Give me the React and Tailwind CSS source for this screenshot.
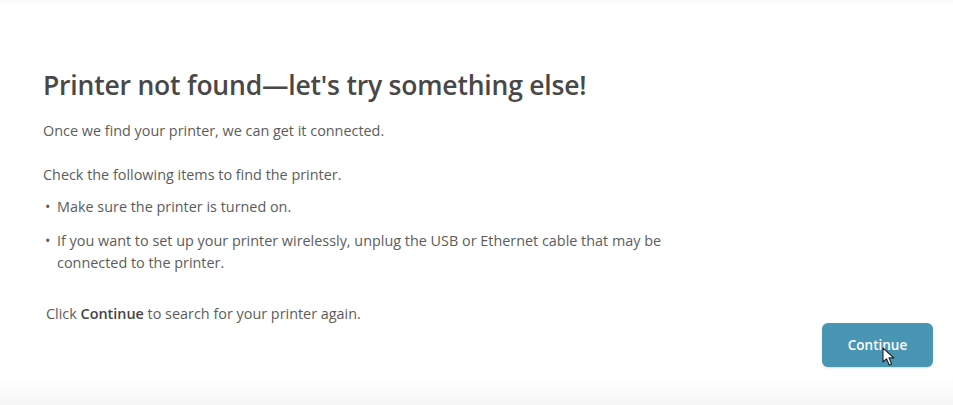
import React from 'react';

const Cursor = () => (
    <svg width="14" height="20" viewBox="0 0 14 20" className="absolute left-[60px] top-[24px]">
        <path d="M1 1 L1 15 L4.5 11.8 L7.2 18 L9.6 17 L7 10.9 L11.8 10.9 Z" fill="#fff" stroke="#222" strokeWidth="1.1" strokeLinejoin="round" />
    </svg>
);

export default function App() {
    return (
        <div className="w-[953px] h-[405px] bg-white relative overflow-hidden text-[#5c5c5c]" style={{ fontFamily: '"Open Sans", "Noto Sans", sans-serif' }}>
            <div className="h-[6px] bg-gradient-to-b from-[#f9f9f9] to-white"></div>

            <div className="pl-[43px] pt-[61px]">
                <h1 className="text-[26.5px] leading-[36px] font-semibold text-[#484848] tracking-[-0.2px]">
                    Printer not found—let's try something else!
                </h1>
                <p className="mt-[18px] text-[14.4px] leading-[20px]">Once we find your printer, we can get it connected.</p>
                <p className="mt-[24px] text-[14.4px] leading-[20px]">Check the following items to find the printer.</p>
                <ul className="mt-[11px] text-[14.4px] leading-[22px] flex flex-col gap-[12px]">
                    <li className="flex"><span className="w-[14px] shrink-0 pl-[2px]">•</span><span>Make sure the printer is turned on.</span></li>
                    <li className="flex"><span className="w-[14px] shrink-0 pl-[2px]">•</span><span className="max-w-[650px]">If you want to set up your printer wirelessly, unplug the USB or Ethernet cable that may be connected to the printer.</span></li>
                </ul>
                <p className="mt-[30px] pl-[3px] text-[14.4px] leading-[20px]">Click <span className="font-semibold text-[#444]">Continue</span> to search for your printer again.</p>
            </div>

            <div className="absolute right-[20px] top-[323px]">
                <button className="relative w-[111px] h-[44px] rounded-[6px] bg-[#4996b4] text-white text-[13.5px] font-semibold shadow-[0_1px_2px_rgba(0,0,0,0.15)]">
                    Continue
                    <Cursor />
                </button>
            </div>

            <div className="absolute left-0 right-0 bottom-0 h-[28px] bg-gradient-to-b from-white to-[#f6f6f6]"></div>
        </div>
    );
}
